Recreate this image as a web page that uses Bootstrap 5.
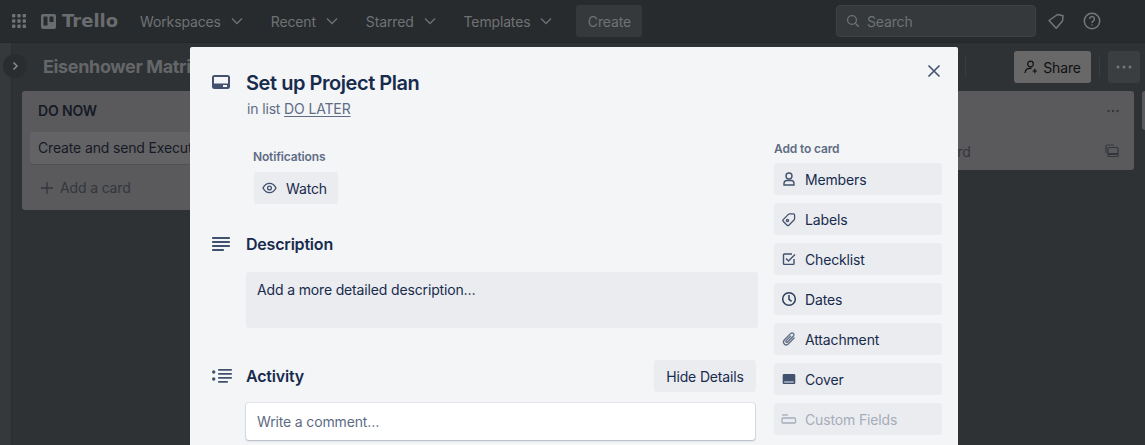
<!DOCTYPE html>
<html lang="en">
<head>
  <meta charset="UTF-8">
  <title>Set up Project Plan - Trello</title>
  <meta name="viewport" content="width=device-width, initial-scale=1">
  <link href="https://cdn.jsdelivr.net/npm/bootstrap@5.3.3/dist/css/bootstrap.min.css" rel="stylesheet">
  <style>
    html, body { height: 445px; overflow: hidden; }
    body { background: #2f3234; font-family: Inter, "Liberation Sans", sans-serif; font-size: 14px; letter-spacing: -.15px; color: #172b4d; position: relative; }
    svg { display: block; flex-shrink: 0; }

    /* dimmed page behind the card dialog */
    .top-bar { height: 43px; background: #282b2d; border-bottom: 1px solid #242729; padding: 5px 8px 5px 11px; color: #727578; }
    .top-logo { font-family: "DejaVu Sans", sans-serif; font-size: 18px; font-weight: 700; color: #6a6d70; letter-spacing: 0; line-height: 22px; margin: 0 22px 0 6px; }
    .top-mark { margin-left: 14px; }
    .top-link { color: #6f7275; margin-right: 28px; gap: 10px; }
    .top-create { width: 66px; height: 32px; background: #35393b; border-radius: 3px; color: #6f7275; margin-left: -4px; }
    .top-search { width: 200px; height: 32px; margin-right: 10px; background: #35393b; border: 1px solid #3d4143; border-radius: 4px; padding-left: 9px; gap: 7px; color: #6f7275; }
    .top-help { margin: 0 35px 0 16px; }

    .board-area { height: 402px; }
    .side-strip { width: 12px; background: #36393b; border-right: 1px solid #2a2d2f; }
    .side-toggle { left: 3px; top: 11px; width: 24px; height: 24px; border-radius: 50%; background: #2a2d2f; }
    .board-main { padding: 8px 5px 0 10px; min-width: 0; }
    .board-title { font-size: 18px; font-weight: 700; color: #646769; margin-left: 21px; line-height: 32px; letter-spacing: -.35px; }
    .bar-rule { width: 1px; height: 20px; background: #3a3d3f; }
    .rule-a { margin-right: 48px; }
    .rule-b { margin: 0 8px; }
    .share-btn { width: 77px; height: 32px; background: #686869; border-radius: 3px; color: #111; gap: 5px; }
    .more-btn { width: 32px; height: 32px; background: #3b3e40; border-radius: 3px; color: #6f7275; }
    .lists { margin: 8px -25px 0 0; }
    .list-box { background: #5a5a5c; border-radius: 3px; flex-shrink: 0; }
    .list-now { width: 272px; height: 119px; }
    .list-later { margin-left: auto; width: 272px; height: 79px; }
    .list-next { margin-left: 8px; width: 23px; height: 39px; }
    .list-name { font-weight: 600; color: #151a26; padding: 11px 16px 0; line-height: 17px; }
    .list-card { margin: 13px 8px 0; background: #636365; border-radius: 3px; padding: 0 8px; height: 32px; line-height: 32px; white-space: nowrap; color: #151a26; box-shadow: 0 1px 0 #505052; }
    .list-add { color: #33363d; padding-left: 18px; margin-top: 13px; gap: 6px; }
    .list-end { height: 40px; padding-right: 15px; color: #33363d; }

    /* card dialog */
    .card-dialog { left: 190px; top: 47px; width: 768px; height: 398px; background: #f4f5f7; border-radius: 2px 2px 0 0; }
    .close-x { right: 16px; top: 16px; width: 16px; height: 16px; }
    .dialog-main { width: 568px; padding-left: 22px; margin-right: 16px; }
    .dialog-side { width: 168px; padding-top: 94px; }
    .icon-col { width: 34px; }
    .card-title { font-size: 20px; font-weight: 600; line-height: 24px; margin: 0; letter-spacing: -.45px; }
    .in-list { color: #5e6c84; line-height: 20px; margin: 4px 0 0 1px; }
    .in-list u { text-underline-offset: 2px; }
    .small-label { font-size: 12px; font-weight: 600; color: #5e6c84; line-height: 16px; }
    .grey-btn { background: #ebecf0; border: 0; border-radius: 3px; height: 32px; color: #172b4d; font-size: 14px; padding: 0; letter-spacing: -.15px; }
    .notify-block { margin: 30px 0 0 42px; }
    .notify-block .small-label { margin-left: -1px; }
    .watch-btn { width: 84px; padding-left: 8px; gap: 9px; margin-top: 7px; }
    .head-desc { margin-top: 30px; }
    .head-activity { margin-top: 32px; }
    .section-head { font-size: 16px; font-weight: 600; line-height: 20px; margin: 0; letter-spacing: -.2px; }
    .desc-box { height: 56px; margin: 18px 0 0 34px; background: #ebecf0; border-radius: 3px; padding: 8px 11px; line-height: 20px; }
    .hide-btn { width: 102px; margin-right: 2px; }
    .comment-box { width: 509px; height: 37px; background: #fff; border-radius: 3px; box-shadow: 0 0 0 1px rgba(9, 30, 66, .06), 0 1px 2px rgba(9, 30, 66, .25); padding: 0 11px; line-height: 37px; color: #5e6c84; margin: 11px 0 0 34px; }
    .side-label { margin-bottom: 6px; }
    .side-btn { width: 168px; gap: 8px; padding-left: 7px; margin-bottom: 8px; }
    .side-btn.off { color: #a5adba; }
  </style>
</head>
<body>
  <nav class="top-bar d-flex align-items-center">
    <svg width="16" height="16" viewBox="0 0 16 16" fill="#6f7275"><rect x="1" y="1" width="3.4" height="3.4" rx=".8"/><rect x="6.3" y="1" width="3.4" height="3.4" rx=".8"/><rect x="11.6" y="1" width="3.4" height="3.4" rx=".8"/><rect x="1" y="6.3" width="3.4" height="3.4" rx=".8"/><rect x="6.3" y="6.3" width="3.4" height="3.4" rx=".8"/><rect x="11.6" y="6.3" width="3.4" height="3.4" rx=".8"/><rect x="1" y="11.6" width="3.4" height="3.4" rx=".8"/><rect x="6.3" y="11.6" width="3.4" height="3.4" rx=".8"/><rect x="11.6" y="11.6" width="3.4" height="3.4" rx=".8"/></svg>
    <svg class="top-mark" width="15" height="15" viewBox="0 0 15 15"><rect width="15" height="15" rx="2" fill="#6a6d70"/><rect x="2.5" y="2.5" width="4" height="9" rx=".6" fill="#282b2d"/><rect x="8.5" y="2.5" width="4" height="5.5" rx=".6" fill="#282b2d"/></svg>
    <span class="top-logo">Trello</span>
    <span class="top-link d-flex align-items-center">Workspaces <svg width="12" height="12" viewBox="0 0 12 12" fill="none" stroke="#6f7275" stroke-width="1.3"><path d="M1 3.500l5 5 5-5"/></svg></span>
    <span class="top-link d-flex align-items-center">Recent <svg width="12" height="12" viewBox="0 0 12 12" fill="none" stroke="#6f7275" stroke-width="1.3"><path d="M1 3.500l5 5 5-5"/></svg></span>
    <span class="top-link d-flex align-items-center">Starred <svg width="12" height="12" viewBox="0 0 12 12" fill="none" stroke="#6f7275" stroke-width="1.3"><path d="M1 3.500l5 5 5-5"/></svg></span>
    <span class="top-link d-flex align-items-center">Templates <svg width="12" height="12" viewBox="0 0 12 12" fill="none" stroke="#6f7275" stroke-width="1.3"><path d="M1 3.500l5 5 5-5"/></svg></span>
    <span class="top-create d-flex align-items-center justify-content-center">Create</span>
    <div class="top-search d-flex align-items-center ms-auto">
      <svg width="14" height="14" viewBox="0 0 14 14" fill="none" stroke="#6f7275" stroke-width="1.3"><circle cx="6" cy="6" r="4.4"/><path d="M9.3 9.3l3.5 3.5"/></svg>
      <span>Search</span>
    </div>
    <svg width="20" height="20" viewBox="0 0 20 20" fill="none" stroke="#75787b" stroke-width="1.5" stroke-linejoin="round"><path d="M3 9.500L11.500 3.500l5.500 1.200-.5 5.300-6.300 7.300z"/></svg>
    <svg class="top-help" width="20" height="20" viewBox="0 0 20 20" fill="none" stroke="#75787b" stroke-width="1.5"><circle cx="10" cy="10" r="7.7"/><path d="M7.600 8a2.400 2.400 0 1 1 3.600 2.100c-.8.500-1.200.9-1.200 1.900"/><path d="M10 13.600v1"/></svg>
  </nav>

  <div class="board-area d-flex position-relative">
    <div class="side-strip"></div>
    <div class="side-toggle position-absolute d-flex align-items-center justify-content-center">
      <svg width="10" height="10" viewBox="0 0 10 10" fill="none" stroke="#85888b" stroke-width="1.6"><path d="M3.500 1.500L7 5 3.500 8.500"/></svg>
    </div>
    <div class="board-main flex-grow-1">
      <div class="d-flex align-items-center">
        <div class="board-title">Eisenhower Matrix</div>
        <div class="bar-rule rule-a ms-auto"></div>
        <div class="share-btn d-flex align-items-center justify-content-center">
          <svg width="14" height="14" viewBox="0 0 14 14" fill="none" stroke="#111" stroke-width="1.2"><circle cx="6.500" cy="4" r="2.800"/><path d="M1 13c.2-1.500.6-3 1.800-4 1.200-.8 3-.8 4.700-.6M8.500 11H13M10.800 8.800v4.400"/></svg>
          Share
        </div>
        <div class="bar-rule rule-b"></div>
        <div class="more-btn d-flex align-items-center justify-content-center">
          <svg width="16" height="4" viewBox="0 0 16 4" fill="#75787b"><circle cx="2" cy="2" r="1.500"/><circle cx="8" cy="2" r="1.500"/><circle cx="14" cy="2" r="1.500"/></svg>
        </div>
      </div>
      <div class="lists d-flex align-items-start">
        <div class="list-box list-now">
          <div class="list-name">DO NOW</div>
          <div class="list-card">Create and send Executive</div>
          <div class="list-add d-flex align-items-center">
            <svg width="14" height="14" viewBox="0 0 14 14" stroke="#33363d" stroke-width="1.300"><path d="M7 1v12M1 7h12"/></svg>
            Add a card
          </div>
        </div>
        <div class="list-box list-later">
          <div class="list-end d-flex align-items-center justify-content-end">
            <svg width="12" height="4" viewBox="0 0 12 4" fill="#33363d"><circle cx="1.500" cy="2" r="1.200"/><circle cx="6" cy="2" r="1.200"/><circle cx="10.500" cy="2" r="1.200"/></svg>
          </div>
          <div class="list-end d-flex align-items-center justify-content-between">
            <div class="list-add d-flex align-items-center m-0">
              <svg width="14" height="14" viewBox="0 0 14 14" stroke="#33363d" stroke-width="1.300"><path d="M7 1v12M1 7h12"/></svg>
              Add a card
            </div>
            <svg width="14" height="14" viewBox="0 0 14 14" fill="none" stroke="#33363d" stroke-width="1.200"><path d="M1 9V2.500C1 1.700 1.700 1 2.500 1H9"/><rect x="3" y="3.500" width="10" height="9" rx="1"/><path d="M3 10h10" stroke-width="2"/></svg>
          </div>
        </div>
        <div class="list-box list-next"></div>
      </div>
    </div>
  </div>

  <div class="card-dialog position-absolute d-flex">
    <svg class="close-x position-absolute" viewBox="0 0 16 16" fill="none" stroke="#42526e" stroke-width="1.600"><path d="M2.500 2.500l11 11M13.500 2.500l-11 11"/></svg>

    <div class="dialog-main">
      <div class="d-flex pt-4">
        <div class="icon-col">
          <svg width="18" height="14" viewBox="0 0 18 14" class="mt-1"><path fill="#42526e" d="M2.500 0h13A2.500 2.500 0 0 1 18 2.500v9a2.500 2.500 0 0 1-2.500 2.500h-13A2.500 2.500 0 0 1 0 11.500v-9A2.500 2.500 0 0 1 2.500 0zM2 2v6.500h14V2z"/><rect x="11" y="10" width="4" height="2" fill="#f4f5f7"/></svg>
        </div>
        <div>
          <h1 class="card-title">Set up Project Plan</h1>
          <div class="in-list">in list <u>DO LATER</u></div>
        </div>
      </div>

      <div class="notify-block d-flex flex-column align-items-start">
        <div class="small-label">Notifications</div>
        <button class="grey-btn watch-btn d-flex align-items-center">
          <svg width="15" height="12" viewBox="0 0 15 12" fill="none" stroke="#42526e" stroke-width="1.300"><path d="M1 6c1.500-3 3.700-4.600 6.500-4.600S12.500 3 14 6c-1.500 3-3.700 4.600-6.500 4.600S2.500 9 1 6z"/><circle cx="7.500" cy="6" r="1.900"/></svg>
          <span>Watch</span>
        </button>
      </div>

      <div class="head-desc d-flex align-items-center">
        <div class="icon-col">
          <svg width="18" height="14" viewBox="0 0 18 14" fill="#42526e"><rect width="18" height="2" rx=".7"/><rect y="4" width="18" height="2" rx=".7"/><rect y="8" width="18" height="2" rx=".7"/><rect y="12" width="12" height="2" rx=".7"/></svg>
        </div>
        <h2 class="section-head">Description</h2>
      </div>
      <div class="desc-box">Add a more detailed description…</div>

      <div class="head-activity d-flex align-items-center">
        <div class="icon-col">
          <svg width="20" height="14" viewBox="0 0 20 14" fill="#42526e"><circle cx="1.700" cy="3" r="1.700"/><circle cx="1.700" cy="10" r="1.700"/><rect x="6" y="0" width="14" height="1.800" rx=".7"/><rect x="6" y="4" width="14" height="1.800" rx=".7"/><rect x="6" y="8" width="14" height="1.800" rx=".7"/><rect x="6" y="12" width="10" height="1.800" rx=".7"/></svg>
        </div>
        <h2 class="section-head">Activity</h2>
        <button class="grey-btn hide-btn ms-auto">Hide Details</button>
      </div>
      <div class="comment-box">Write a comment…</div>
    </div>

    <div class="dialog-side">
      <div class="small-label side-label">Add to card</div>
      <button class="grey-btn side-btn d-flex align-items-center">
        <svg width="16" height="16" viewBox="0 0 16 16" fill="none" stroke="#42526e" stroke-width="1.400"><circle cx="8" cy="5" r="3"/><path d="M3 14v-1.500C3 10.500 4.500 9.500 6 9.500h4c1.500 0 3 1 3 3V14z"/></svg>
        <span>Members</span>
      </button>
      <button class="grey-btn side-btn d-flex align-items-center">
        <svg width="16" height="16" viewBox="0 0 16 16" fill="none" stroke="#42526e" stroke-width="1.300"><path d="M2.200 8.600L7.400 3.400c.4-.4.900-.6 1.400-.6h3.600c.7 0 1.200.5 1.200 1.200v3.600c0 .5-.2 1-.6 1.400l-5.200 5.200c-.5.500-1.200.5-1.700 0L2.200 10.300c-.5-.5-.5-1.200 0-1.700z"/><circle cx="6.500" cy="9.500" r="1.100"/></svg>
        <span>Labels</span>
      </button>
      <button class="grey-btn side-btn d-flex align-items-center">
        <svg width="16" height="16" viewBox="0 0 16 16" fill="none" stroke="#42526e" stroke-width="1.400"><path d="M13 8v4.500c0 .5-.4.900-.9.900H3.400c-.5 0-.9-.4-.9-.9V3.900c0-.5.400-.9.900-.9H11"/><path d="M5 7.500l2.500 2.500L14 3.500"/></svg>
        <span>Checklist</span>
      </button>
      <button class="grey-btn side-btn d-flex align-items-center">
        <svg width="16" height="16" viewBox="0 0 16 16" fill="none" stroke="#2c3e5d" stroke-width="1.500"><circle cx="8" cy="8" r="6.300"/><path d="M8 4v4.300l2.600 2"/></svg>
        <span>Dates</span>
      </button>
      <button class="grey-btn side-btn d-flex align-items-center">
        <svg width="16" height="16" viewBox="0 0 16 16" fill="none" stroke="#5e6c84" stroke-width="1.300"><path d="M13.500 6.500l-6 6.300c-1.300 1.300-3.100 1.300-4.200.2s-1-2.900.2-4.200l6-6.200c.9-.9 2.100-.9 2.900-.2s.7 2-.2 2.900L6.500 11c-.4.400-1 .4-1.400 0s-.3-1 .1-1.400L10 4.700"/></svg>
        <span>Attachment</span>
      </button>
      <button class="grey-btn side-btn d-flex align-items-center">
        <svg width="16" height="16" viewBox="0 0 16 16"><path fill="#42526e" fill-rule="evenodd" d="M3 3h10c.8 0 1.300.6 1.300 1.300v7.400c0 .7-.5 1.300-1.300 1.300H3c-.8 0-1.300-.6-1.300-1.300V4.300C1.700 3.600 2.200 3 3 3zm.2 7.600v1h9.600v-1z"/></svg>
        <span>Cover</span>
      </button>
      <button class="grey-btn side-btn off d-flex align-items-center">
        <svg width="16" height="16" viewBox="0 0 16 16" fill="none" stroke="#a5adba" stroke-width="1.300"><path d="M1 4h6"/><rect x="1" y="7" width="13.500" height="5" rx="1"/></svg>
        <span>Custom Fields</span>
      </button>
    </div>
  </div>
  <script src="https://cdn.jsdelivr.net/npm/bootstrap@5.3.3/dist/js/bootstrap.bundle.min.js"></script>
</body>
</html>
